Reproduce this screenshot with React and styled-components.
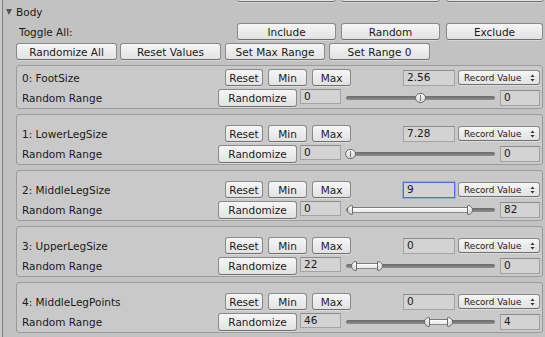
import React from "react";
import styled, { createGlobalStyle } from "styled-components";

const GlobalStyle = createGlobalStyle`
  html, body {
    margin: 0;
    padding: 0;
    background: #c9c9c9;
    overflow: hidden;
  }
  body {
    font-family: "DejaVu Sans", "Liberation Sans", sans-serif;
    font-size: 10.5px;
    color: #1a1a1a;
  }
`;

const Inspector = styled.div`
  margin-left: 2px;
  border-left: 1px solid #7e7e7e;
  background: #c2c2c2;
  height: 337px;
  padding: 0 2px 0 13px;
  box-sizing: border-box;
  overflow: hidden;
`;

const Button = styled.div`
  box-sizing: border-box;
  height: ${(p) => p.h || 17}px;
  width: ${(p) => p.w}px;
  margin-left: ${(p) => p.ml || 0}px;
  flex: none;
  display: flex;
  align-items: center;
  justify-content: center;
  border: 1px solid #8a8a8a;
  border-bottom-color: #6f6f6f;
  border-radius: 3px;
  background: linear-gradient(#f6f6f6, #e2e2e2);
  box-shadow: 0 1px 0 rgba(255, 255, 255, 0.35);
  white-space: nowrap;
  color: #1a1a1a;
`;

const StubRow = styled.div`
  display: flex;
  margin-top: -16px;
  padding-left: 221px;
  height: 18px;
`;

const Foldout = styled.div`
  display: flex;
  align-items: center;
  height: 18px;
  margin-left: -10px;
  margin-top: 1px;
  gap: 4px;
`;

const Arrow = styled.span`
  width: 0;
  height: 0;
  border-left: 3.5px solid transparent;
  border-right: 3.5px solid transparent;
  border-top: 6px solid #555;
`;

const ToggleRow = styled.div`
  display: flex;
  align-items: center;
  height: 17px;
  margin-top: 2px;
`;

const ToggleLabel = styled.span`
  width: 218px;
  margin-left: 3px;
  flex: none;
`;

const ActionRow = styled.div`
  display: flex;
  margin-top: 3px;
  height: 17px;
`;

const List = styled.div`
  display: flex;
  flex-direction: column;
  gap: 5px;
  margin-top: 5px;
`;

const Box = styled.div`
  box-sizing: border-box;
  width: 527px;
  background: #c9c9c9;
  border: 1px solid #9b9b9b;
  border-radius: 3px;
  padding: ${(p) => (p.first ? 3 : 10)}px 2px 1px 5px;
  display: flex;
  flex-direction: column;
  gap: 3px;
`;

const Row = styled.div`
  display: flex;
  align-items: center;
  height: ${(p) => p.h}px;
`;

const Label = styled.span`
  flex: 1;
`;

const Field = styled.div`
  box-sizing: border-box;
  width: ${(p) => p.w}px;
  height: ${(p) => p.h || 16}px;
  margin-left: ${(p) => p.ml || 0}px;
  flex: none;
  background: #d3d3d3;
  border: 1px solid ${(p) => (p.focus ? "#4a6fe0" : "#a3a3a3")};
  border-top-color: ${(p) => (p.focus ? "#4a6fe0" : "#8c8c8c")};
  box-shadow: ${(p) => (p.focus ? "0 0 0 0.5px #6d8ee8" : "none")};
  padding: 0 3px;
  line-height: 13px;
  align-self: ${(p) => (p.top ? "flex-start" : "center")};
`;

const Popup = styled(Button)`
  font-size: 8.8px;
  justify-content: space-between;
  padding: 0 4px 0 5px;
  border-radius: 3px;
`;

const Updown = () => (
  <svg width="5" height="8" viewBox="0 0 5 8">
    <path d="M2.5 0.5 L4.6 3 L0.4 3 Z M2.5 7.5 L4.6 5 L0.4 5 Z" fill="#333" />
  </svg>
);

const SliderWrap = styled.div`
  position: relative;
  width: 151px;
  height: 12px;
  margin-left: 4px;
  flex: none;
`;

const Track = styled.div`
  position: absolute;
  left: 1px;
  right: 1px;
  top: 4px;
  height: 4px;
  border-radius: 2px;
  background: linear-gradient(#6a6a6a, #8e8e8e);
`;

const Thumb = styled.div`
  position: absolute;
  top: 1px;
  width: 11px;
  height: 10px;
  box-sizing: border-box;
  border: 1px solid #6d6d6d;
  border-radius: 5px;
  background: linear-gradient(#fbfbfb, #d4d4d4);
  &::after {
    content: "";
    position: absolute;
    left: 4px;
    top: 1px;
    bottom: 1px;
    width: 1px;
    background: #777;
  }
`;

const RangeBar = styled.div`
  position: absolute;
  top: 3px;
  height: 6px;
  box-sizing: border-box;
  border-top: 1px solid #7a7a7a;
  border-bottom: 1px solid #8a8a8a;
  background: linear-gradient(#fdfdfd, #e6e6e6);
`;

const Handle = styled.div`
  position: absolute;
  top: 1px;
  width: 6px;
  height: 10px;
  box-sizing: border-box;
  border: 1px solid #6d6d6d;
  border-radius: ${(p) => (p.side === "left" ? "5px 1px 1px 5px" : "1px 5px 5px 1px")};
  background: linear-gradient(#fbfbfb, #d4d4d4);
`;

const SLIDER_W = 151;

const Slider = ({ value, range }) => {
  if (range) {
    const lo = Math.round(range[0] * SLIDER_W);
    const hi = Math.round(range[1] * SLIDER_W);
    return (
      <SliderWrap>
        <Track />
        <RangeBar style={{ left: lo + 3, width: hi - lo - 6 }} />
        <Handle side="left" style={{ left: lo }} />
        <Handle side="right" style={{ left: hi - 6 }} />
      </SliderWrap>
    );
  }
  return (
    <SliderWrap>
      <Track />
      <Thumb style={{ left: Math.round(value * (SLIDER_W - 11)) }} />
    </SliderWrap>
  );
};

const entries = [
  { name: "0: FootSize", value: "2.56", min: "0", max: "0", slider: { value: 0.5 } },
  { name: "1: LowerLegSize", value: "7.28", min: "0", max: "0", slider: { value: 0 } },
  { name: "2: MiddleLegSize", value: "9", focus: true, min: "0", max: "82", slider: { range: [0.01, 0.845] } },
  { name: "3: UpperLegSize", value: "0", min: "22", max: "0", slider: { range: [0.04, 0.25] } },
  { name: "4: MiddleLegPoints", value: "0", min: "46", max: "4", slider: { range: [0.52, 0.715] } },
];

const Entry = ({ item, first }) => (
  <Box first={first}>
    <Row h={17}>
      <Label>{item.name}</Label>
      <Button w={38}>Reset</Button>
      <Button w={39} ml={5}>Min</Button>
      <Button w={39} ml={5}>Max</Button>
      <Field w={52} ml={52} focus={item.focus}>{item.value}</Field>
      <Popup w={82} h={15} ml={3}>
        <span>Record Value</span>
        <Updown />
      </Popup>
    </Row>
    <Row h={18}>
      <Label>Random Range</Label>
      <Button w={79} h={18}>Randomize</Button>
      <Field w={41} ml={3} h={15} top>{item.min}</Field>
      <Slider {...item.slider} />
      <Field w={40} ml={4} h={16}>{item.max}</Field>
    </Row>
  </Box>
);

export default function App() {
  return (
    <>
      <GlobalStyle />
      <Inspector>
        <StubRow>
          <Button w={99} h={18} />
          <Button w={99} h={18} ml={5} />
          <Button w={98} h={18} ml={6} />
        </StubRow>
        <Foldout>
          <Arrow />
          <span>Body</span>
        </Foldout>
        <ToggleRow>
          <ToggleLabel>Toggle All:</ToggleLabel>
          <Button w={99}>Include</Button>
          <Button w={99} ml={5}>Random</Button>
          <Button w={97} ml={6}>Exclude</Button>
        </ToggleRow>
        <ActionRow>
          <Button w={101}>Randomize All</Button>
          <Button w={101} ml={3}>Reset Values</Button>
          <Button w={100} ml={4}>Set Max Range</Button>
          <Button w={101} ml={4}>Set Range 0</Button>
        </ActionRow>
        <List>
          {entries.map((item, i) => (
            <Entry key={item.name} item={item} first={i === 0} />
          ))}
        </List>
      </Inspector>
    </>
  );
}
